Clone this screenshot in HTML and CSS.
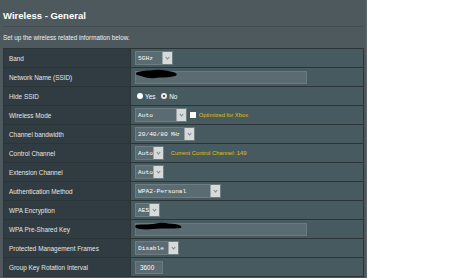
FILE: index.html
```html
<!DOCTYPE html>
<html lang="en">
<head>
  <meta charset="UTF-8">
  <meta name="viewport" content="width=device-width, initial-scale=1.0">
  <title>Wireless - General</title>
  <link rel="stylesheet" href="styles.css">
</head>
<body>
  <div class="panel">
    <div class="title">Wireless - General</div>
    <div class="subtitle">Set up the wireless related information below.</div>

    <table class="form">
      <tr>
        <th>Band</th>
        <td><span class="sel w-band">5GHz<i class="arrow"></i></span></td>
      </tr>
      <tr>
        <th>Network Name (SSID)</th>
        <td>
          <span class="input w-long">
            <svg class="blob" width="44" height="10" viewBox="0 0 44 10"><path d="M1 4 C6 1 14 2 20 1 C26 0 32 2 38 3 C42 4 43 6 40 7 C34 9 26 8 20 9 C14 10 10 8 6 7 C2 6 0 5 1 4 Z" fill="#000"/></svg>
          </span>
        </td>
      </tr>
      <tr>
        <th>Hide SSID</th>
        <td>
          <span class="radio"></span><span class="opt">Yes</span>
          <span class="radio on"></span><span class="opt">No</span>
        </td>
      </tr>
      <tr>
        <th>Wireless Mode</th>
        <td>
          <span class="sel w-mode">Auto<i class="arrow"></i></span>
          <span class="check"></span><span class="note">Optimized for Xbox</span>
        </td>
      </tr>
      <tr>
        <th>Channel bandwidth</th>
        <td><span class="sel w-bw">20/40/80<small>MHz</small><i class="arrow"></i></span></td>
      </tr>
      <tr>
        <th>Control Channel</th>
        <td>
          <span class="sel w-auto">Auto<i class="arrow"></i></span>
          <span class="note gap">Current Control Channel: 149</span>
        </td>
      </tr>
      <tr>
        <th>Extension Channel</th>
        <td><span class="sel w-auto">Auto<i class="arrow"></i></span></td>
      </tr>
      <tr>
        <th>Authentication Method</th>
        <td><span class="sel w-auth">WPA2-Personal<i class="arrow"></i></span></td>
      </tr>
      <tr>
        <th>WPA Encryption</th>
        <td><span class="sel w-aes">AES<i class="arrow"></i></span></td>
      </tr>
      <tr>
        <th>WPA Pre-Shared Key</th>
        <td>
          <span class="input w-long">
            <svg class="blob" width="48" height="8" viewBox="0 0 48 8"><path d="M1 3 C8 2 16 3 24 1 C30 0 34 2 40 2 C45 3 47 4 46 6 C38 7 28 6 18 7 C10 8 4 7 1 6 C0 5 0 4 1 3 Z" fill="#000"/></svg>
          </span>
        </td>
      </tr>
      <tr>
        <th>Protected Management Frames</th>
        <td><span class="sel w-pmf">Disable<i class="arrow"></i></span></td>
      </tr>
      <tr>
        <th>Group Key Rotation Interval</th>
        <td><span class="input w-short">3600</span></td>
      </tr>
    </table>
  </div>
</body>
</html>
```

FILE: styles.css
```css
:root {
  --panel: #4e595e;
  --label: #303c41;
  --value: #475a60;
  --line: #2b3538;
  --field: #5a6b71;
  --note: #e0c000;
}
body {
  margin: 0;
  background: #ffffff;
  font-family: "Liberation Sans", Arial, sans-serif;
  color: #ffffff;
}
.panel {
  width: 367px;
  min-height: 100vh;
  background: var(--panel);
  border-right: 1px solid #5d676b;
  box-sizing: border-box;
  padding: 0 3px;
}
.title {
  font-size: 9.5px;
  font-weight: bold;
  line-height: 14px;
  padding: 9px 0 3px 0;
  border-bottom: 1px solid #434d51;
}
.subtitle {
  font-size: 6.3px;
  line-height: 10px;
  padding-top: 6px;
  color: #f0f0f0;
}
.form {
  margin-top: 5px;
  width: 361px;
  border-collapse: collapse;
  border: 1px solid var(--line);
}
.form tr {
  height: 19px;
  border-bottom: 1px solid var(--line);
}
.form th {
  width: 121px;
  background: var(--label);
  text-align: left;
  font-weight: normal;
  font-size: 6.4px;
  color: #e6e6e6;
  padding: 0 0 0 5px;
  border-right: 1px solid var(--line);
}
.form td {
  background: var(--value);
  padding: 0 0 0 4px;
  font-size: 6.4px;
  white-space: nowrap;
}
.sel {
  display: inline-flex;
  align-items: center;
  vertical-align: middle;
  position: relative;
  height: 14px;
  box-sizing: border-box;
  padding-left: 2px;
  background: var(--field);
  border: 1px solid #6d7d82;
  font-family: "Liberation Mono", "DejaVu Sans Mono", monospace;
  font-size: 6.2px;
  color: #ffffff;
}
.sel small {
  font-size: 6px;
  margin-left: 3px;
  transform: scale(0.8);
  transform-origin: left center;
}
.arrow {
  position: absolute;
  right: 0;
  top: 0;
  bottom: 0;
  width: 9px;
  background: #d6dadb;
  border-left: 1px solid #9aa4a7;
}
.arrow::after {
  content: "";
  position: absolute;
  left: 3px;
  top: 4px;
  width: 2px;
  height: 2px;
  border-right: 1px solid #7d878a;
  border-bottom: 1px solid #7d878a;
  transform: rotate(45deg);
}
.w-band { width: 38px; }
.w-mode { width: 52px; }
.w-bw { width: 60px; }
.w-auto { width: 29px; }
.w-auth { width: 86px; }
.w-aes { width: 25px; }
.w-pmf { width: 44px; }
.input {
  display: inline-flex;
  align-items: center;
  vertical-align: middle;
  height: 13px;
  box-sizing: border-box;
  padding-left: 2px;
  background: var(--field);
  border: 1px solid #6a7a80;
  font-family: "Liberation Sans", Arial, sans-serif;
  font-size: 6.4px;
}
.w-long { width: 172px; }
.w-short {
  width: 28px;
  padding-left: 4px;
}
.blob {
  margin-top: -6px;
  margin-left: -3px;
}
.radio {
  display: inline-block;
  vertical-align: middle;
  width: 6px;
  height: 6px;
  border-radius: 50%;
  background: #ffffff;
  margin-left: 2px;
  box-sizing: border-box;
}
.radio.on {
  border: 2px solid #e8e8e8;
  background: #222;
  margin-left: 4px;
}
.opt {
  vertical-align: middle;
  margin-left: 2px;
}
.check {
  display: inline-block;
  vertical-align: middle;
  width: 6px;
  height: 6px;
  background: #ffffff;
  margin-left: 1px;
}
.note {
  vertical-align: middle;
  color: var(--note);
  font-size: 5.8px;
  margin-left: 3px;
}
.note.gap { margin-left: 5px; }
```
